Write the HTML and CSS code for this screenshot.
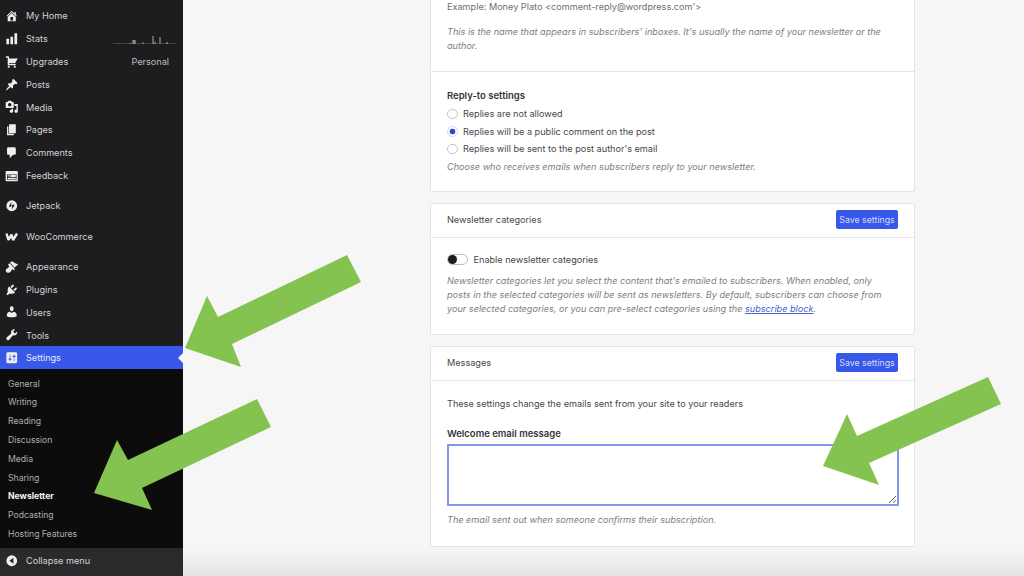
FILE: index.html
```html
<!DOCTYPE html>
<html lang="en">
<head>
<meta charset="utf-8">
<title>Newsletter settings</title>
<link rel="stylesheet" href="styles.css">
</head>
<body>
<div class="page">
  <nav class="sidebar">
    <ul class="menu">
      <li class="item"><svg class="ico" viewBox="0 0 20 20"><path d="M16 8.5l1.53 1.53-1.06 1.06L10 4.62l-6.47 6.47-1.06-1.06L10 2.5l4 4v-2h2v4zm-6-2.46l6 5.99V18H4v-5.97zM12 17v-5H8v5h4z"/></svg><span>My Home</span></li>
      <li class="item"><svg class="ico" viewBox="0 0 20 20"><path d="M18 18V2h-4v16h4zm-6 0V7H8v11h4zm-6 0v-8H2v8h4z"/></svg><span>Stats</span>
        <svg class="spark" viewBox="0 0 64 10"><path d="M0 9.700h64" stroke="#9a9a9a" stroke-width=".6" stroke-dasharray="1.2 .8"/><path d="M17 10v-1M20 10v-4M21 10v-4M22 10v-4M30 10v-1.500M40 10v-8M42 10v-2.500M47 10v-7M54 10v-2" stroke="#b0b0b0" stroke-width="1"/></svg></li>
      <li class="item"><svg class="ico" viewBox="0 0 20 20"><path d="M6 13h9c.55 0 1 .45 1 1s-.45 1-1 1H5c-.55 0-1-.45-1-1V4H2c-.55 0-1-.45-1-1s.45-1 1-1h3c.55 0 1 .45 1 1v2h13l-4 7H6v1zm-.5 3c.83 0 1.5.67 1.5 1.5S6.33 19 5.5 19 4 18.33 4 17.5 4.67 16 5.5 16zm9 0c.83 0 1.5.67 1.5 1.5s-.67 1.5-1.5 1.5-1.5-.67-1.5-1.5.67-1.5 1.5-1.500z"/></svg><span>Upgrades</span><span class="note">Personal</span></li>
      <li class="item"><svg class="ico" viewBox="0 0 20 20"><path d="M10.44 3.02l1.82-1.82 6.36 6.35-1.83 1.82c-1.05-.68-2.48-.57-3.41.36l-.75.75c-.92.93-1.04 2.35-.35 3.41l-1.83 1.82-2.41-2.41-2.8 2.79c-.42.42-3.38 2.71-3.8 2.29s1.86-3.39 2.28-3.81l2.79-2.79L4.1 9.36l1.83-1.82c1.05.69 2.48.57 3.4-.36l.75-.75c.93-.92 1.05-2.35.36-3.41z"/></svg><span>Posts</span></li>
      <li class="item"><svg class="ico" viewBox="0 0 20 20"><path d="M13 11V4c0-.55-.45-1-1-1h-1.670L9 1H5L3.670 3H2c-.55 0-1 .45-1 1v7c0 .55.45 1 1 1h10c.55 0 1-.45 1-1zM7 4.500c1.380 0 2.500 1.120 2.500 2.500S8.380 9.500 7 9.500 4.500 8.380 4.500 7 5.620 4.500 7 4.500zM14 6h5v10.500c0 1.380-1.120 2.500-2.500 2.500S14 17.880 14 16.500s1.120-2.500 2.500-2.500c.17 0 .34.020.5.050V9h-3V6zm-4 8.050V13h2v3.500c0 1.380-1.120 2.500-2.500 2.500S7 17.880 7 16.500 8.120 14 9.500 14c.17 0 .34.020.5.050z"/></svg><span>Media</span></li>
      <li class="item"><svg class="ico" viewBox="0 0 20 20"><path d="M6 15V2h10v13H6zm-1 1h8v2H3V5h2v11z"/></svg><span>Pages</span></li>
      <li class="item"><svg class="ico" viewBox="0 0 20 20"><path d="M5 2h9c1.100 0 2 .9 2 2v7c0 1.100-.9 2-2 2h-2l-5 5v-5H5c-1.100 0-2-.9-2-2V4c0-1.100.9-2 2-2z"/></svg><span>Comments</span></li>
      <li class="item"><svg class="ico" viewBox="0 0 20 20"><path fill-rule="evenodd" d="M2 3h16c.55 0 1 .45 1 1v13c0 .55-.45 1-1 1H2c-.55 0-1-.45-1-1V4c0-.55.45-1 1-1zm15 13V8H3v8h14zM4 9v1h3V9H4zm4 0v3h8V9H8zm-4 2v1h3v-1H4zm0 2v2h12v-2H4z"/></svg><span>Feedback</span></li>
    </ul>
    <ul class="menu menu-gap">
      <li class="item"><svg class="ico" viewBox="0 0 20 20"><path fill-rule="evenodd" d="M10 2a8 8 0 1 1 0 16 8 8 0 0 1 0-16zM9.400 4.500 5.600 11.500h3.800zM10.600 15.500l3.800-7h-3.800z"/></svg><span>Jetpack</span></li>
    </ul>
    <ul class="menu menu-gap">
      <li class="item"><svg class="ico" viewBox="0 0 13.500 13.500"><path class="woo" d="M1.500 3.500 3.500 10 6.500 4.500 8 10 12 3.500"/></svg><span>WooCommerce</span></li>
    </ul>
    <ul class="menu menu-gap">
      <li class="item"><svg class="ico" viewBox="0 0 20 20"><path d="M14.480 11.060L7.410 3.990l1.500-1.500c.5-.56 2.300-.47 3.510.32 1.210.8 1.430 1.280 2.910 2.100 1.180.64 2.450 1.260 4.450.85zm-.71.71L6.700 4.700 4.930 6.470c-.39.39-.39 1.020 0 1.410l1.060 1.060c.39.39.39 1.030 0 1.420-.6.6-1.430 1.110-2.210 1.690-.35.26-.7.53-1.010.84C1.430 13.230 1 14.490 1 15.500 1 17 3 19 4.500 19c1.010 0 2.270-.43 3.610-1.770.31-.31.58-.66.84-1.010.58-.78 1.090-1.610 1.690-2.210.39-.39 1.030-.39 1.420 0l1.060 1.060c.39.39 1.020.39 1.410 0z"/></svg><span>Appearance</span></li>
      <li class="item"><svg class="ico" viewBox="0 0 20 20"><path d="M13.110 4.360L9.870 7.600 8 5.730l3.240-3.240c.35-.34 1.050-.2 1.560.32.52.51.66 1.210.31 1.550zm-8 1.770l.91-1.120 9.010 9.010-1.190.84c-.71.71-2.630 1.160-3.820 1.160H6.140L4.900 17.260c-.59.59-1.540.59-2.120 0-.59-.58-.59-1.530 0-2.120l1.240-1.240v-3.880c0-1.130.4-3.190 1.090-3.890zm7.260 3.970l3.240-3.240c.34-.35 1.040-.21 1.550.31.52.51.66 1.210.31 1.550l-3.240 3.250z"/></svg><span>Plugins</span></li>
      <li class="item"><svg class="ico" viewBox="0 0 20 20"><path d="M10 9.250c-2.270 0-2.730-3.440-2.730-3.440C7 4.020 7.820 2 9.970 2c2.160 0 2.980 2.020 2.710 3.810 0 0-.41 3.440-2.680 3.440zm0 2.570L12.720 10c2.390 0 4.520 2.330 4.520 4.530v2.490s-3.650 1.130-7.240 1.130c-3.650 0-7.240-1.130-7.240-1.130v-2.490c0-2.250 1.940-4.480 4.470-4.480z"/></svg><span>Users</span></li>
      <li class="item"><svg class="ico" viewBox="0 0 20 20"><path d="M16.680 9.770c-1.340 1.340-3.300 1.670-4.950.99l-5.410 6.520c-.99.99-2.590.99-3.580 0s-.99-2.590 0-3.570l6.520-5.420c-.68-1.650-.35-3.610.99-4.950 1.280-1.280 3.120-1.620 4.720-1.060l-2.890 2.890 2.820 2.820 2.860-2.870c.53 1.580.18 3.390-1.080 4.650z"/></svg><span>Tools</span></li>
      <li class="item current"><svg class="ico" viewBox="0 0 20 20"><path d="M18 16V4c0-1.100-.9-2-2-2H4c-1.100 0-2 .9-2 2v12c0 1.100.9 2 2 2h12c1.100 0 2-.9 2-2zM8 11h1c.55 0 1 .45 1 1s-.45 1-1 1H8v1.500c0 .28-.22.5-.5.5s-.5-.22-.5-.5V13H6c-.55 0-1-.45-1-1s.45-1 1-1h1V5.500c0-.28.22-.5.5-.5s.5.22.5.5V11zm5-2h-1c-.55 0-1-.45-1-1s.45-1 1-1h1V5.500c0-.28.22-.5.5-.5s.5.22.5.5V7h1c.55 0 1 .45 1 1s-.45 1-1 1h-1v5.500c0 .28-.22.5-.5.5s-.5-.22-.5-.5V9z"/></svg><span>Settings</span></li>
    </ul>
    <ul class="submenu">
      <li>General</li>
      <li>Writing</li>
      <li>Reading</li>
      <li>Discussion</li>
      <li>Media</li>
      <li>Sharing</li>
      <li class="sub-current">Newsletter</li>
      <li>Podcasting</li>
      <li>Hosting Features</li>
    </ul>
    <div class="item collapse"><svg class="ico" viewBox="0 0 20 20"><path fill-rule="evenodd" d="M10 2a8 8 0 1 1 0 16 8 8 0 0 1 0-16zM12.500 5.500 6.500 10l6 4.500z"/></svg><span>Collapse menu</span></div>
  </nav>

  <main class="main">
    <section class="card card-first">
      <div class="body body-top">
        <p class="plain">Example: Money Plato &lt;comment-reply@wordpress.com'&gt;</p>
        <p class="help help-top">This is the name that appears in subscribers' inboxes. It's usually the name of your newsletter or the author.</p>
      </div>
      <div class="body body-reply">
        <h3 class="label">Reply-to settings</h3>
        <label class="radio"><span class="dot"></span>Replies are not allowed</label>
        <label class="radio"><span class="dot dot-on"></span>Replies will be a public comment on the post</label>
        <label class="radio"><span class="dot"></span>Replies will be sent to the post author's email</label>
        <p class="help">Choose who receives emails when subscribers reply to your newsletter.</p>
      </div>
    </section>

    <section class="card">
      <header class="head"><span>Newsletter categories</span><button class="save">Save settings</button></header>
      <div class="body body-cats">
        <label class="toggle-row"><span class="toggle"></span>Enable newsletter categories</label>
        <p class="help help-cats">Newsletter categories let you select the content that's emailed to subscribers. When enabled, only posts in the selected categories will be sent as newsletters. By default, subscribers can choose from your selected categories, or you can pre-select categories using the <a class="link">subscribe block</a>.</p>
      </div>
    </section>

    <section class="card">
      <header class="head"><span>Messages</span><button class="save">Save settings</button></header>
      <div class="body body-msg">
        <p class="plain">These settings change the emails sent from your site to your readers</p>
        <h3 class="label label-msg">Welcome email message</h3>
        <textarea class="area" readonly></textarea>
        <p class="help help-msg">The email sent out when someone confirms their subscription.</p>
      </div>
    </section>
  </main>
</div>
<div class="fade"></div>
<svg class="arrows" viewBox="0 0 1024 576">
  <polygon points="347,255 361,282 232,344 241,367 185,348 207,296 218,317"/>
  <polygon points="257,399 271,427 142,488 152,510 94,493 117,440 128,460"/>
  <polygon points="988,377 1001,404 869,463 879,485 823,466 847,414 857,436"/>
</svg>
</body>
</html>
```

FILE: styles.css
```css
* { box-sizing: border-box; }
html, body { margin: 0; padding: 0; height: 100%; overflow: hidden; }
body { background: #f6f6f7; font-family: Inter, "Liberation Sans", sans-serif; font-size: 9.15px; color: #44474c; }
ul { list-style: none; margin: 0; padding: 0; }
p, h3 { margin: 0; }

.page { display: flex; height: 576px; }

.sidebar { width: 183px; flex: none; height: 576px; background: #1d1d1f; color: #d2d2d3; padding-top: 4.5px; display: flex; flex-direction: column; }
.menu-gap { margin-top: 7.6px; }
.item { display: flex; align-items: center; height: 22.8px; padding-left: 5px; gap: 7.500px; position: relative; white-space: nowrap; }
.ico { width: 13.500px; height: 13.500px; flex: none; fill: #eeeeee; }
.woo { fill: none; stroke: #eeeeee; stroke-width: 2.400; stroke-linejoin: bevel; }
.note { position: absolute; right: 14px; color: #bdbdbe; }
.spark { position: absolute; left: 113px; top: 7px; width: 64px; height: 10px; }
.current { background: #3858e9; color: #e6e9fb; }
.current::after { content: ""; position: absolute; right: 0; top: 6.400px; border: 5px solid transparent; border-right-color: #f6f6f7; border-left-width: 0; }
.submenu { background: #0c0c0d; padding: 5px 0 5px 8px; flex: 1; color: #aeaeaf; font-size: 8.650px; }
.submenu li { height: 18.800px; display: flex; align-items: center; }
.sub-current { color: #f4f4f4; font-weight: 700; }
.collapse { background: #2a2a2c; height: 28px; flex: none; padding-bottom: 4px; }

.main { flex: 1; padding-left: 247px; }

.card { width: 485px; background: #fff; border: 1px solid #e4e4e6; border-radius: 2px; margin-bottom: 11px; }
.card-first { border-top: 0; border-radius: 0 0 2px 2px; }
.body { padding: 0 16px; }
.body-top { height: 72px; padding-top: 1px; border-bottom: 1px solid #e6e6e8; }
.body-top .plain { line-height: 12px; color: #6c6f74; }
.help { font-style: italic; color: #7c7e83; line-height: 14px; }
.help-top { margin-top: 12px; }
.help-cats { max-width: 445px; }
.body-reply { height: 119px; padding-top: 17.500px; }
.label { font-size: 9.500px; font-weight: 600; color: #33363b; line-height: 12px; margin-bottom: 3.500px; }
.radio { display: flex; align-items: center; gap: 5.500px; height: 17.600px; }
.dot { width: 10.500px; height: 10.500px; border-radius: 50%; border: 1px solid #c4c4c6; background: #fff; flex: none; }
.dot-on { border-color: #cfd5f5; background: radial-gradient(circle, #2f49c8 0 2.600px, #fff 3.200px); }
.body-reply .help { margin-top: 2px; line-height: 13px; }

.head { height: 34px; padding: 0 16px 1.500px; display: flex; align-items: center; justify-content: space-between; border-bottom: 1px solid #e6e6e8; }
.save { width: 62px; height: 19px; padding: 0; border: 0; border-radius: 2px; background: #3858e9; color: #d3daf9; font: inherit; font-size: 8.800px; }
.body-cats { padding-top: 16px; height: 96px; }
.toggle-row { display: flex; align-items: center; gap: 5.500px; height: 11px; margin-bottom: 8.500px; }
.toggle { width: 21px; height: 11px; border-radius: 6px; border: 1px solid #bcbcbe; background: #fff; position: relative; flex: none; }
.toggle::before { content: ""; position: absolute; left: 0; top: 0; width: 9px; height: 9px; border-radius: 50%; background: #1d1d1f; }
.link { color: #4a60cc; text-decoration: underline; }

.body-msg { padding-top: 17px; height: 165px; }
.body-msg .plain { line-height: 12px; }
.label-msg { margin: 18px 0 3.500px; }
.area { display: block; width: 452px; height: 62.500px; border: 2px solid #8496e6; border-radius: 1px; background: #fff; padding: 0; margin: 0 0 0 -.5px; outline: 0; }
.help-msg { margin-top: 6.500px; }

.fade { position: absolute; left: 183px; right: 0; bottom: 0; height: 26px; background: linear-gradient(to bottom, rgba(225,225,227,0), rgba(225,225,227,.9)); pointer-events: none; }
.arrows { position: absolute; left: 0; top: 0; width: 1024px; height: 576px; pointer-events: none; }
.arrows polygon { fill: #84c34f; }
```
